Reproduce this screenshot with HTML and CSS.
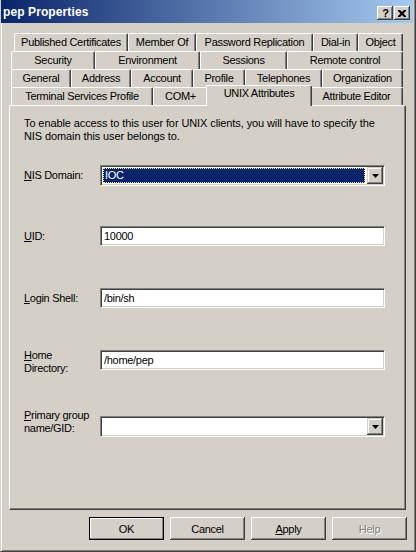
FILE: index.html
```html
<!DOCTYPE html>
<html>
<head>
<meta charset="utf-8">
<link rel="stylesheet" href="styles.css">
</head>
<body>
<div class="window">
  <div class="titlebar">
    <span class="title">pep Properties</span>
    <div class="tb-buttons">
      <span class="tb-btn help-q">?</span>
      <span class="tb-btn"><svg width="8" height="7" viewBox="0 0 8 7"><path d="M0 0h2l2 2 2-2h2v1l-2.5 2.5 2.5 2.5v1h-2l-2-2-2 2h-2v-1l2.5-2.5-2.5-2.5z" fill="#000"/></svg></span>
    </div>
  </div>

  <div class="tabs">
    <div class="tabrow r1">
      <div class="tab">Published Certificates</div>
      <div class="tab">Member Of</div>
      <div class="tab">Password Replication</div>
      <div class="tab">Dial-in</div>
      <div class="tab">Object</div>
    </div>
    <div class="tabrow r2">
      <div class="tab">Security</div>
      <div class="tab">Environment</div>
      <div class="tab">Sessions</div>
      <div class="tab">Remote control</div>
    </div>
    <div class="tabrow r3">
      <div class="tab">General</div>
      <div class="tab">Address</div>
      <div class="tab">Account</div>
      <div class="tab">Profile</div>
      <div class="tab">Telephones</div>
      <div class="tab">Organization</div>
    </div>
    <div class="tabrow r4">
      <div class="tab">Terminal Services Profile</div>
      <div class="tab">COM+</div>
      <div class="tab selected">UNIX Attributes</div>
      <div class="tab">Attribute Editor</div>
    </div>
  </div>

  <div class="panel">
    <p class="intro">To enable access to this user for UNIX clients, you will have to specify the NIS domain this user belongs to.</p>

    <div class="field f-nis">
      <label class="lbl"><u>N</u>IS Domain:</label>
      <div class="combo">
        <div class="combo-value focused"><span>IOC</span></div>
        <div class="drop"><svg width="7" height="4" viewBox="0 0 7 4"><path d="M0 0h7l-3.5 4z" fill="#000"/></svg></div>
      </div>
    </div>

    <div class="field f-uid">
      <label class="lbl"><u>U</u>ID:</label>
      <div class="input">10000</div>
    </div>

    <div class="field f-gap">
      <label class="lbl"><u>L</u>ogin Shell:</label>
      <div class="input">/bin/sh</div>
    </div>

    <div class="field f-gap f-home">
      <label class="lbl two"><u>H</u>ome<br>Directory:</label>
      <div class="input">/home/pep</div>
    </div>

    <div class="field f-gid">
      <label class="lbl two"><u>P</u>rimary group<br>name/GID:</label>
      <div class="combo">
        <div class="combo-value"></div>
        <div class="drop"><svg width="7" height="4" viewBox="0 0 7 4"><path d="M0 0h7l-3.5 4z" fill="#000"/></svg></div>
      </div>
    </div>
  </div>

  <div class="buttons">
    <button class="btn default">OK</button>
    <button class="btn">Cancel</button>
    <button class="btn"><u>A</u>pply</button>
    <button class="btn disabled">Help</button>
  </div>
</div>
</body>
</html>
```

FILE: styles.css
```css
* { box-sizing: border-box; }

html, body {
  margin: 0;
  padding: 0;
  background: #d4d0c8;
}

body {
  font-family: "Liberation Sans", Arial, sans-serif;
  font-size: 11px;
  letter-spacing: -0.3px;
  color: #000;
}

.window {
  width: 416px;
  height: 552px;
  background: #d4d0c8;
  border-left: 1px solid #d4d0c8;
  border-right: 1px solid #404040;
  border-bottom: 1px solid #404040;
  box-shadow: inset 1px 0 #fff, inset -1px -1px #808080;
  display: flex;
  flex-direction: column;
}

/* Title bar */
.titlebar {
  height: 23px;
  margin-right: 2px;
  background: linear-gradient(to right, #0a246a, #a6caf0);
  display: flex;
  align-items: center;
  justify-content: space-between;
  padding: 0 3px 0 2px;
}

.title {
  color: #fff;
  font-weight: bold;
  font-size: 12px;
  letter-spacing: 0.1px;
  margin-top: 1px;
}

.tb-buttons {
  display: flex;
  gap: 1px;
  margin-top: 3px;
}

.tb-btn {
  width: 16px;
  height: 14px;
  background: #d4d0c8;
  box-shadow: inset -1px -1px #404040, inset 1px 1px #fff, inset -2px -2px #808080;
  display: flex;
  align-items: center;
  justify-content: center;
  font-weight: bold;
  font-size: 11px;
  line-height: 14px;
}

.help-q { padding-left: 1px; }

/* Tabs */
.tabs {
  margin-top: 10px;
  display: flex;
  flex-direction: column;
}

.tabrow {
  display: grid;
  height: 18px;
}

.r1 { margin-left: 13px; grid-template-columns: 114px 68px 117px 45px 45px; }
.r2 { margin-left: 10px; grid-template-columns: 84px 105px 87px 116px; }
.r3 { margin-left: 10px; grid-template-columns: 60px 60px 62px 52px 77px 81px; }
.r4 { margin-left: 10px; grid-template-columns: 142px 55px 102px 93px; }

.tab {
  height: 18px;
  background: #d4d0c8;
  border-top: 1px solid #fff;
  border-left: 1px solid #fff;
  border-right: 1px solid #404040;
  border-top-left-radius: 2px;
  border-top-right-radius: 2px;
  box-shadow: inset -1px 0 #808080;
  text-align: center;
  line-height: 16px;
  white-space: nowrap;
}

.tab.selected {
  position: relative;
  z-index: 2;
  margin: -2px -2px 0 -2px;
  height: 21px;
  line-height: 15px;
}

/* Panel */
.panel {
  margin-left: 8px;
  width: 397px;
  height: 405px;
  border-top: 1px solid #fff;
  border-left: 1px solid #fff;
  border-right: 1px solid #404040;
  border-bottom: 1px solid #404040;
  box-shadow: inset -1px -1px #808080;
  padding: 11px 0 0 14px;
  position: relative;
  z-index: 1;
}

.intro {
  margin: 0;
  width: 354px;
  line-height: 13px;
  letter-spacing: -0.1px;
}

.field {
  display: grid;
  grid-template-columns: 76px 285px;
  align-items: center;
}

.f-nis { margin-top: 22px; }
.f-uid { margin-top: 40px; }
.f-gap { margin-top: 42px; }
.f-home { align-items: start; }
.f-home .lbl { margin-top: -1px; }
.f-gid { margin-top: 34px; align-items: end; }
.f-gid .lbl { padding-bottom: 2px; }

.lbl {
  line-height: 13px;
  white-space: nowrap;
}

.input {
  height: 20px;
  background: #fff;
  border-top: 1px solid #808080;
  border-left: 1px solid #808080;
  border-right: 1px solid #fff;
  border-bottom: 1px solid #fff;
  box-shadow: inset 1px 1px #404040, inset -1px -1px #d4d0c8;
  padding-left: 3px;
  line-height: 18px;
}

.combo {
  height: 21px;
  background: #fff;
  border-top: 1px solid #808080;
  border-left: 1px solid #808080;
  border-right: 1px solid #fff;
  border-bottom: 1px solid #fff;
  box-shadow: inset 1px 1px #404040, inset -1px -1px #d4d0c8;
  padding: 1px 1px 1px 1px;
  display: flex;
  gap: 1px;
}

.combo-value {
  flex: 1;
  padding: 1px;
}

.combo-value.focused span {
  display: block;
  height: 100%;
  background: #0a246a;
  color: #fff;
  border: 1px dotted #f0e68c;
  line-height: 13px;
  padding-left: 1px;
}

.drop {
  width: 16px;
  height: 17px;
  background: #d4d0c8;
  box-shadow: inset -1px -1px #404040, inset 1px 1px #d4d0c8, inset -2px -2px #808080, inset 2px 2px #fff;
  display: flex;
  align-items: center;
  justify-content: center;
}

/* Bottom buttons */
.buttons {
  margin-top: 7px;
  display: flex;
  justify-content: flex-end;
  gap: 6px;
  padding-right: 8px;
}

.btn {
  width: 75px;
  height: 23px;
  font-family: inherit;
  font-size: 11px;
  letter-spacing: -0.3px;
  color: #000;
  background: #d4d0c8;
  border: none;
  padding: 0;
  margin: 0;
  box-shadow: inset -1px -1px #404040, inset 1px 1px #fff, inset -2px -2px #808080;
}

.btn.default {
  border: 1px solid #000;
  box-shadow: inset -1px -1px #808080, inset 1px 1px #fff;
}

.btn.disabled {
  color: #808080;
  text-shadow: 1px 1px #fff;
}
```
